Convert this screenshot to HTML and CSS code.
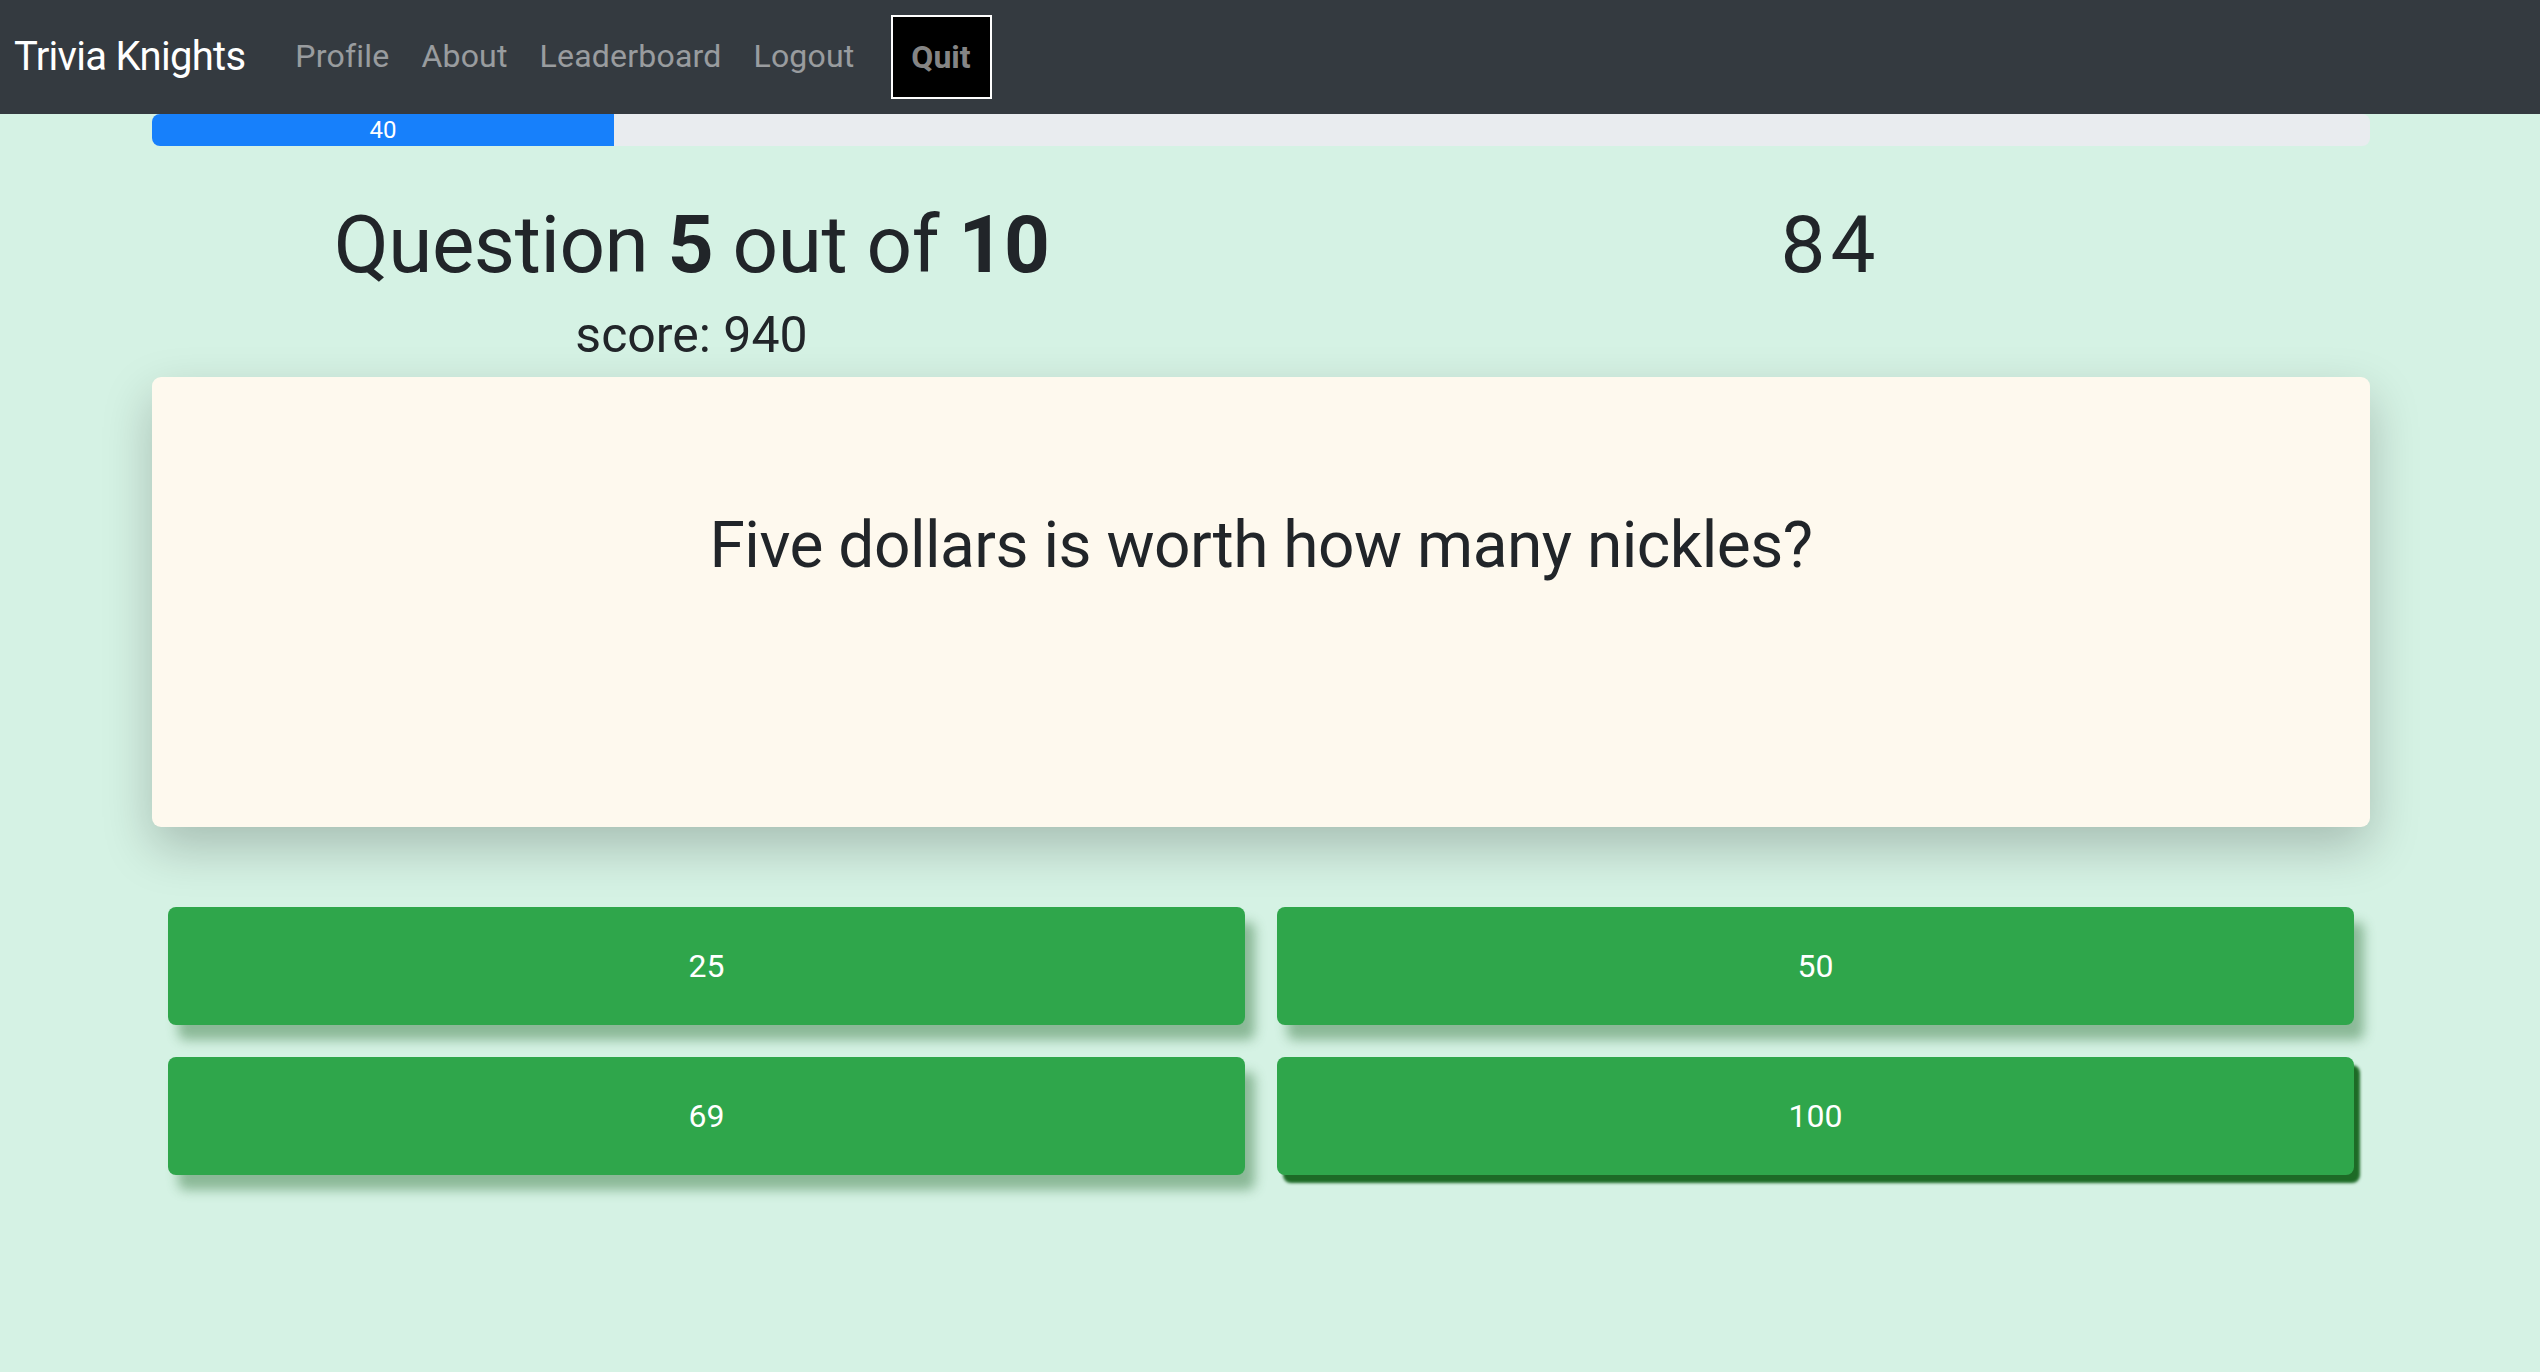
FILE: index.html
```html
<!DOCTYPE html>
<html lang="en">
<head>
<meta charset="utf-8">
<title>Trivia Knights</title>
<link rel="stylesheet" href="styles.css">
</head>
<body>
<nav class="navbar">
  <a class="brand" href="#">Trivia Knights</a>
  <a class="nav-link" href="#">Profile</a>
  <a class="nav-link" href="#">About</a>
  <a class="nav-link" href="#">Leaderboard</a>
  <a class="nav-link" href="#">Logout</a>
  <button class="quit">Quit</button>
</nav>
<main class="container">
  <div class="progress">
    <div class="progress-bar" style="width: 462px">40</div>
  </div>
  <div class="head-row">
    <div class="col">
      <h1 class="title">Question <b>5</b> out of <b>10</b></h1>
      <h4 class="score">score: 940</h4>
    </div>
    <div class="col">
      <h1 class="timer">84</h1>
    </div>
  </div>
  <div class="card">
    <h2 class="question">Five dollars is worth how many nickles?</h2>
  </div>
  <div class="answers">
    <button class="answer">25</button>
    <button class="answer">50</button>
    <button class="answer">69</button>
    <button class="answer active">100</button>
  </div>
</main>
</body>
</html>
```
FILE: styles.css
```css
* { box-sizing: border-box; }
html, body { margin: 0; padding: 0; }
body {
  background: #d5f2e4;
  font-family: Roboto, "Liberation Sans", Arial, sans-serif;
  color: #212529;
  min-height: 1372px;
}
.navbar {
  height: 114px;
  background: #343a40;
  display: flex;
  align-items: center;
  padding: 0 14px;
}
.brand {
  font-size: 40px;
  letter-spacing: -0.7px;
  color: #fff;
  text-decoration: none;
  margin-right: 34px;
  margin-top: -2px;
}
.nav-link {
  font-size: 32px;
  letter-spacing: 0.2px;
  color: rgba(255,255,255,.5);
  text-decoration: none;
  padding: 0 16px;
  margin-top: -2px;
}
.quit {
  margin-left: 20px;
  width: 101px;
  height: 84px;
  background: #000;
  border: 2px solid #fff;
  color: #858585;
  font-family: inherit;
  font-size: 32px;
  font-weight: 700;
  padding: 0;
}
.container {
  width: 2218px;
  margin-left: 152px;
}
.progress {
  height: 32px;
  background: #e9ecef;
  border-radius: 8px;
  overflow: hidden;
  display: flex;
}
.progress-bar {
  background: #1780fb;
  color: #fff;
  font-size: 24px;
  display: flex;
  align-items: center;
  justify-content: center;
}
.head-row {
  display: grid;
  grid-template-columns: 1fr 1fr;
  margin: 0 -30px;
  padding-top: 51px;
}
.col {
  padding: 0 30px;
  text-align: center;
}
.title, .timer {
  font-size: 80px;
  line-height: 96px;
  font-weight: 400;
  margin: 0 0 14px;
}
.title { letter-spacing: -0.45px; }
.timer { letter-spacing: 5px; }
.title b { font-weight: 700; }
.score {
  font-size: 50px;
  line-height: 57px;
  font-weight: 400;
  margin: 0;
}
.card {
  margin-top: 13px;
  height: 450px;
  background: #fef9ee;
  border-radius: 9px;
  box-shadow: 0 20px 50px rgba(0,0,0,.22);
  padding-top: 130px;
  text-align: center;
}
.question {
  font-size: 64px;
  line-height: 77px;
  font-weight: 400;
  letter-spacing: -0.5px;
  margin: 0;
}
.answers {
  display: grid;
  grid-template-columns: 1fr 1fr;
  margin-top: 64px;
}
.answer {
  margin: 16px;
  height: 118px;
  border: none;
  border-radius: 8px;
  background: #2fa64b;
  color: #fff;
  font-family: inherit;
  font-size: 32px;
  box-shadow: 10px 15px 12px rgba(49,115,57,.45);
}
.answer.active {
  box-shadow: 6px 8px 3px #1d6a26;
}
```
